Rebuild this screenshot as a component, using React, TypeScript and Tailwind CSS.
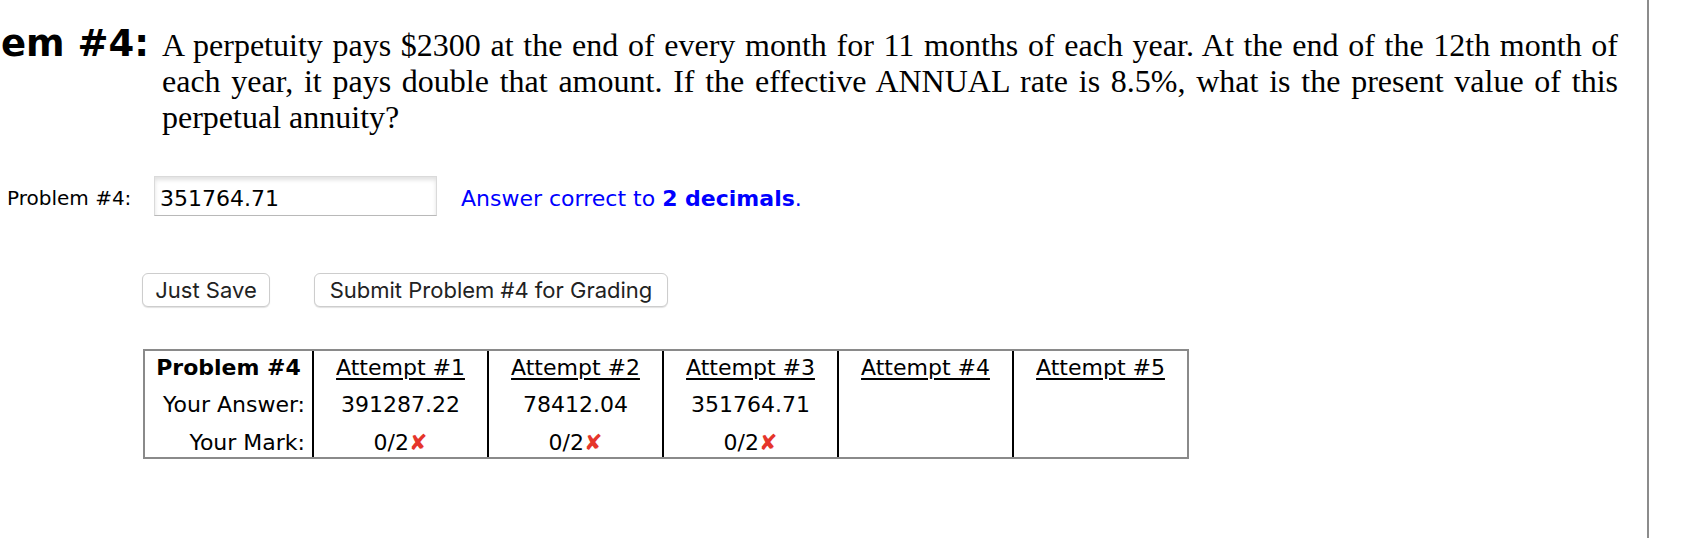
import React from "react";

interface IAttempt {
  id: number;
  answer?: string;
  mark?: string;
}

const attempts: IAttempt[] = [
  { id: 1, answer: "391287.22", mark: "0/2" },
  { id: 2, answer: "78412.04", mark: "0/2" },
  { id: 3, answer: "351764.71", mark: "0/2" },
  { id: 4 },
  { id: 5 },
];

const sans = "font-['DejaVu_Sans',Verdana,sans-serif]";

const App = () => {
  return (
    <div className="w-[1694px] h-[538px] bg-white text-black overflow-hidden">
      <div className="w-[1649px] h-[538px] border-r-2 border-[#8c8c8c] flex flex-col">
        {/* Question */}
        <div className="flex items-baseline pt-[26px]">
          <div className={`w-[149px] shrink-0 overflow-hidden flex justify-end whitespace-nowrap text-[37px] leading-[36px] font-bold ${sans}`}>
            Problem #4:
          </div>
          <div className="ml-[13px] w-[1456px] font-['Liberation_Serif','Times_New_Roman',serif] text-[32px] leading-[36px]">
            <div className="text-justify [text-align-last:justify] whitespace-nowrap">
              A perpetuity pays $2300 at the end of every month for 11 months of each year. At the end of the 12th month of
            </div>
            <div className="text-justify [text-align-last:justify] whitespace-nowrap">
              each year, it pays double that amount. If the effective ANNUAL rate is 8.5%, what is the present value of this
            </div>
            <div>perpetual annuity?</div>
          </div>
        </div>

        {/* Answer input */}
        <div className={`flex items-center mt-[41px] ${sans}`}>
          <label className="w-[154px] pl-[7px] pt-[4px] text-[20px]">Problem #4:</label>
          <div className="w-[283px] h-[40px] flex items-center pl-[5px] pt-[4px] border border-[#dadada] border-b-[#b9b9b9] shadow-[inset_0_3px_4px_rgba(0,0,0,0.12)] text-[22px]">
            351764.71
          </div>
          <div className="ml-[24px] pt-[4px] text-[22px] text-[#0000ff]">
            Answer correct to <b>2 decimals</b>.
          </div>
        </div>

        {/* Buttons */}
        <div className="flex items-center mt-[57px] ml-[142px] gap-[44px] font-['Inter','Liberation_Sans',sans-serif] text-[22px] text-[#222]">
          <button className="w-[128px] h-[34px] rounded-[6px] border border-[#cdcdcd] bg-white shadow-[0_1px_1px_rgba(0,0,0,0.12)]">
            Just Save
          </button>
          <button className="w-[354px] h-[34px] rounded-[6px] border border-[#cdcdcd] bg-white shadow-[0_1px_1px_rgba(0,0,0,0.12)]">
            Submit Problem #4 for Grading
          </button>
        </div>

        {/* Attempts table */}
        <div className={`mt-[42px] ml-[143px] w-[1046px] flex border-2 border-[#8a8a8a] text-[22px] ${sans}`}>
          <div className="w-[167px] flex flex-col">
            <div className="h-[35px] leading-[34px] text-center font-bold">Problem #4</div>
            <div className="h-[38px] leading-[38px] text-right pr-[7px]">Your Answer:</div>
            <div className="h-[33px] leading-[38px] text-right pr-[7px]">Your Mark:</div>
          </div>
          {attempts.map((a) => (
            <div key={a.id} className="w-[175px] flex flex-col border-l-2 border-black text-center">
              <div className="h-[35px] leading-[34px]">
                <span className="underline underline-offset-[3px]">Attempt #{a.id}</span>
              </div>
              <div className="h-[38px] leading-[38px]">{a.answer}</div>
              <div className="h-[33px] leading-[38px]">
                {a.mark && (
                  <>
                    {a.mark}
                    <span className="text-[#e5352b]">✘</span>
                  </>
                )}
              </div>
            </div>
          ))}
        </div>
      </div>
    </div>
  );
};

export default App;
